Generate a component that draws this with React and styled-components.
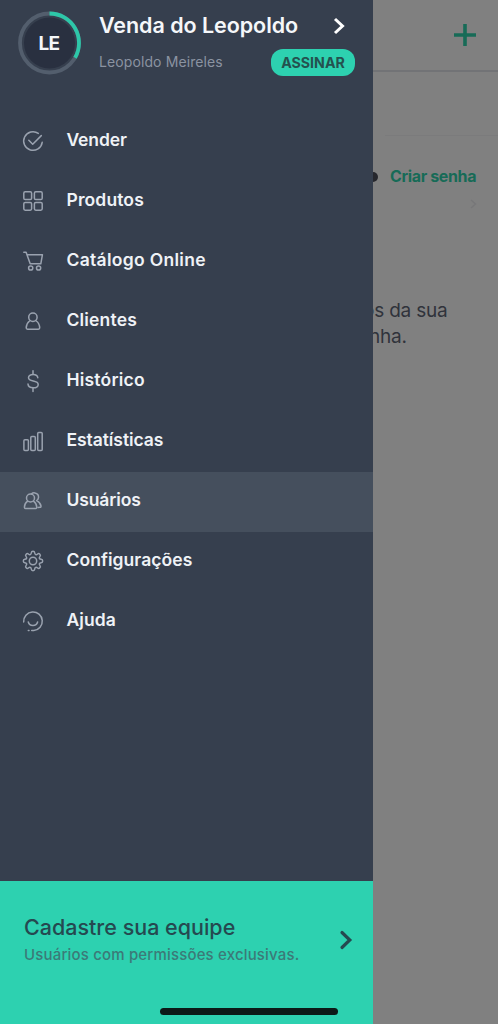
import React from "react";
import styled, { createGlobalStyle } from "styled-components";

const GlobalStyle = createGlobalStyle`
  body {
    margin: 0;
    font-family: "Inter", "Liberation Sans", sans-serif;
    background-color: #808080;
  }

  * {
    box-sizing: border-box;
  }
`;

// Layout
const Screen = styled.div`
  display: flex;
  width: 498px;
  height: 1024px;
  overflow: hidden;
`;

const Drawer = styled.aside`
  display: flex;
  flex-direction: column;
  flex: none;
  width: 373px;
  background-color: #363f4e;
`;

// Account
const Account = styled.header`
  display: flex;
  height: 111.6px;
  padding: 11px 18px 0;
`;

const Avatar = styled.svg`
  flex: none;
  width: 63px;
  height: 64px;
  margin-right: 18px;
`;

const Initials = styled.text`
  font-size: 19px;
  font-weight: 700;
  letter-spacing: -0.6px;
  fill: #f5f7fa;
  text-anchor: middle;
`;

const AccountInfo = styled.div`
  flex: 1;
`;

const AccountRow = styled.div`
  display: flex;
  justify-content: space-between;
  align-items: flex-start;
  height: 38px;
`;

const StoreName = styled.h1`
  margin: 0;
  font-size: 21.5px;
  font-weight: 600;
  line-height: 28px;
  letter-spacing: -0.05px;
  color: #f5f7fa;
  white-space: nowrap;
`;

const UserName = styled.span`
  padding-top: 3px;
  font-size: 14px;
  line-height: 20px;
  letter-spacing: 0.1px;
  color: #8b93a1;
  white-space: nowrap;
`;

const SubscribeButton = styled.button`
  width: 84px;
  height: 27px;
  padding: 0;
  border: none;
  border-radius: 12px;
  background-color: #2dd1b0;
  font-family: inherit;
  font-size: 14.2px;
  font-weight: 700;
  line-height: 27px;
  color: #24524f;
  cursor: pointer;
`;

const AccountArrow = styled.svg`
  width: 12px;
  height: 18px;
  margin: 6px 10px 0 0;
`;

// Menu
const Menu = styled.nav`
  flex: 1;
`;

const MenuItem = styled.a`
  display: flex;
  align-items: center;
  height: 60px;
  padding: 0 23px 1px;
  background-color: ${({ $active }) => ($active ? "#454f5d" : "transparent")};
  cursor: pointer;
`;

const MenuIcon = styled.svg`
  flex: none;
  width: 20px;
  height: 20px;
  margin-right: 23.5px;
  overflow: visible;
  fill: none;
  stroke: #9aa2af;
  stroke-width: 1.5;
  stroke-linecap: round;
  stroke-linejoin: round;
`;

const MenuLabel = styled.span`
  padding-bottom: 3px;
  font-size: 17.5px;
  font-weight: 600;
  line-height: 24px;
  letter-spacing: ${({ $spacing }) => $spacing || 0}px;
  color: #eff2f6;
`;

// Promo banner
const Banner = styled.footer`
  display: flex;
  flex-direction: column;
  justify-content: space-between;
  height: 143px;
  padding: 32px 20px 9px 24px;
  background-color: #2dd1b0;
`;

const BannerRow = styled.div`
  display: flex;
  align-items: center;
  justify-content: space-between;
`;

const BannerTitle = styled.h2`
  margin: 0;
  font-size: 21.5px;
  font-weight: 500;
  line-height: 28px;
  color: #254950;
`;

const BannerText = styled.p`
  margin: 2px 0 0;
  font-size: 15px;
  font-weight: 500;
  line-height: 24px;
  letter-spacing: 0.17px;
  color: #3c7a78;
`;

const BannerArrow = styled.svg`
  width: 14px;
  height: 20px;
`;

const HomeIndicator = styled.div`
  align-self: flex-end;
  width: 178px;
  height: 7px;
  margin-right: 15px;
  border-radius: 4px;
  background-color: #0c1a18;
`;

// Page behind the drawer
const Page = styled.main`
  display: flex;
  flex-direction: column;
  flex: 1;
  overflow: hidden;
  background-color: #808080;
`;

const PageHeader = styled.div`
  display: flex;
  justify-content: flex-end;
  height: 72px;
  padding: 24px 22px 0 0;
  border-bottom: 2px solid #727376;
`;

const PlusIcon = styled.svg`
  width: 22px;
  height: 22px;
`;

const Divider = styled.div`
  height: 64px;
  margin-left: 12px;
  border-bottom: 1px solid #7b7b7c;
`;

const PasswordRow = styled.div`
  display: flex;
  align-items: center;
  height: 24px;
  margin-top: 28px;
`;

const PasswordDot = styled.span`
  flex: none;
  width: 10px;
  height: 10px;
  margin: 2px 12px 0 -5px;
  border-radius: 50%;
  background-color: #26272d;
`;

const PasswordLink = styled.a`
  font-size: 16px;
  font-weight: 700;
  line-height: 24px;
  letter-spacing: -0.36px;
  color: #176b57;
  white-space: nowrap;
`;

const RowArrow = styled.svg`
  align-self: flex-end;
  width: 7px;
  height: 10px;
  margin: 11px 21px 0 0;
`;

const HelpText = styled.p`
  margin: 89px 0 0 -10px;
  font-size: 19px;
  line-height: 26px;
  letter-spacing: -0.2px;
  color: #30333b;
  white-space: nowrap;
`;

const HelpLine = styled.span`
  display: block;
  margin-left: ${({ $shift }) => $shift || 0}px;
`;

// Eight-toothed gear outline around (10, 10), rounded through edge midpoints
const gearPoints = Array.from({ length: 8 }, (_, tooth) =>
  [
    [-15, 7],
    [-9, 9.8],
    [9, 9.8],
    [15, 7],
  ].map(([offset, radius]) => {
    const angle = ((tooth * 45 + offset) * Math.PI) / 180;
    return [10 + radius * Math.sin(angle), 10 - radius * Math.cos(angle)];
  }),
).flat();

const gearPath = gearPoints
  .map(([x, y], i) => {
    const [nextX, nextY] = gearPoints[(i + 1) % gearPoints.length];
    const mid = `${((x + nextX) / 2).toFixed(2)} ${((y + nextY) / 2).toFixed(2)}`;
    return i === 0 ? `M${mid}` : `Q${x.toFixed(2)} ${y.toFixed(2)} ${mid}`;
  })
  .concat(
    `Q${gearPoints[0].map((n) => n.toFixed(2)).join(" ")} ${(
      (gearPoints[0][0] + gearPoints[1][0]) /
      2
    ).toFixed(2)} ${((gearPoints[0][1] + gearPoints[1][1]) / 2).toFixed(2)}Z`,
  )
  .join("");

const menuItems = [
  {
    label: "Vender",
    spacing: -0.1,
    icon: (
      <>
        <path d="M15.3 2.4A9.3 9.3 0 1 0 19.2 11.3" />
        <path d="M5.8 9.2l3.9 4 8.6-8.6" />
      </>
    ),
  },
  {
    label: "Produtos",
    spacing: 0.12,
    icon: (
      <>
        <rect x="0.8" y="0.8" width="7.8" height="7.8" rx="1.4" />
        <rect x="11.4" y="0.8" width="7.8" height="7.8" rx="1.4" />
        <rect x="0.8" y="11.4" width="7.8" height="7.8" rx="1.4" />
        <rect x="11.4" y="11.4" width="7.8" height="7.8" rx="1.4" />
      </>
    ),
  },
  {
    label: "Catálogo Online",
    spacing: 0.3,
    icon: (
      <>
        <path d="M0.8 1.3h2.3L7.2 12.8h10.6L19.4 3.8H4" />
        <circle cx="7.7" cy="17" r="2.1" />
        <circle cx="15.6" cy="17" r="2.1" />
      </>
    ),
  },
  {
    label: "Clientes",
    spacing: 0.18,
    icon: (
      <>
        <circle cx="9.9" cy="6.3" r="4.2" />
        <path d="M6.6 10C4.6 11.4 3.4 13.7 3.2 16.8q0 1.4 1.3 1.4h10.9q1.3 0 1.3-1.4C16.5 13.7 15.3 11.4 13.2 10" />
      </>
    ),
  },
  {
    label: "Histórico",
    spacing: 0.2,
    icon: (
      <>
        <path d="M10 -0.2V3.3M10 16.8V20.5" />
        <path d="M14.8 6.8C14.6 4.6 12.8 3.4 10.1 3.4C7.4 3.4 5.5 4.7 5.5 6.7C5.5 8.8 7.4 9.4 10.2 10C13.2 10.6 15.2 11.3 15.2 13.4C15.2 15.6 13.2 16.8 10.3 16.8C7.2 16.8 5.2 15.4 5 13.1" />
      </>
    ),
  },
  {
    label: "Estatísticas",
    spacing: -0.07,
    icon: (
      <>
        <rect x="0.9" y="8.8" width="4.5" height="10.7" rx="1" />
        <rect x="7.8" y="5.4" width="4.5" height="14.1" rx="1" />
        <rect x="14.7" y="1.4" width="4.5" height="18.1" rx="1" />
      </>
    ),
  },
  {
    label: "Usuários",
    spacing: -0.12,
    active: true,
    icon: (
      <>
        <circle cx="7.5" cy="7" r="4" />
        <path d="M4.6 10.2C2.5 11.7 1.5 13.8 1.4 16.2q0 1.3 1.2 1.3h10q1.2 0 1.2-1.3C13.6 13.8 12.6 11.7 10.5 10.2" />
        <path d="M8.5 2.8C9.4 2 10.6 1.7 11.8 1.9C14.2 2.3 15.8 4.2 15.5 6.6C15.3 8 14.6 9 13.6 9.6C16.1 10.8 17.6 12.7 18 15q0.2 1.2-1 1.3l-2 0.2" />
      </>
    ),
  },
  {
    label: "Configurações",
    spacing: 0.06,
    icon: (
      <>
        <path d={gearPath} />
        <circle cx="10" cy="10" r="3.7" />
      </>
    ),
  },
  {
    label: "Ajuda",
    spacing: 0.05,
    icon: (
      <>
        <path d="M0.7 10.9A9.3 9.3 0 1 1 10.8 19.5H8.7" />
        <path d="M5.3 11C6.4 15.6 13.4 15.7 14.6 11M5.3 19.5h0.7" />
      </>
    ),
  },
];

export default function App() {
  return (
    <>
      <GlobalStyle />
      <Screen>
        <Drawer>
          <Account>
            <Avatar viewBox="0 0 63 64" fill="none">
              <circle cx="31.5" cy="32" r="25.5" fill="#293040" />
              <circle
                cx="31.5"
                cy="32"
                r="29.5"
                stroke="#535e6d"
                strokeWidth="3.8"
              />
              <path
                d="M31.5 2.5A29.5 29.5 0 0 1 57.05 46.75"
                stroke="#2dc7a9"
                strokeWidth="3.8"
              />
              <Initials x="31" y="38.5">
                LE
              </Initials>
            </Avatar>
            <AccountInfo>
              <AccountRow>
                <StoreName>Venda do Leopoldo</StoreName>
                <AccountArrow viewBox="0 0 12 18" fill="none">
                  <path d="M2 2l7.5 7L2 16" stroke="#fff" strokeWidth="3" />
                </AccountArrow>
              </AccountRow>
              <AccountRow>
                <UserName>Leopoldo Meireles</UserName>
                <SubscribeButton>ASSINAR</SubscribeButton>
              </AccountRow>
            </AccountInfo>
          </Account>

          <Menu>
            {menuItems.map(({ label, icon, active, spacing }) => (
              <MenuItem key={label} $active={active}>
                <MenuIcon viewBox="0 0 20 20">{icon}</MenuIcon>
                <MenuLabel $spacing={spacing}>{label}</MenuLabel>
              </MenuItem>
            ))}
          </Menu>

          <Banner>
            <BannerRow>
              <div>
                <BannerTitle>Cadastre sua equipe</BannerTitle>
                <BannerText>Usuários com permissões exclusivas.</BannerText>
              </div>
              <BannerArrow viewBox="0 0 14 20" fill="none">
                <path
                  d="M3 2.5l7.8 7.5L3 17.5"
                  stroke="#254950"
                  strokeWidth="3.2"
                  strokeLinecap="round"
                />
              </BannerArrow>
            </BannerRow>
            <HomeIndicator />
          </Banner>
        </Drawer>

        <Page>
          <PageHeader>
            <PlusIcon viewBox="0 0 22 22">
              <path d="M11 0v22M0 11h22" stroke="#176b57" strokeWidth="3.6" />
            </PlusIcon>
          </PageHeader>
          <Divider />
          <PasswordRow>
            <PasswordDot />
            <PasswordLink>Criar senha</PasswordLink>
          </PasswordRow>
          <RowArrow viewBox="0 0 7 10" fill="none">
            <path d="M1 1l4.5 4L1 9" stroke="#777779" strokeWidth="1.5" />
          </RowArrow>
          <HelpText>
            <HelpLine>os da sua</HelpLine>
            <HelpLine $shift={6}>nha.</HelpLine>
          </HelpText>
        </Page>
      </Screen>
    </>
  );
}
